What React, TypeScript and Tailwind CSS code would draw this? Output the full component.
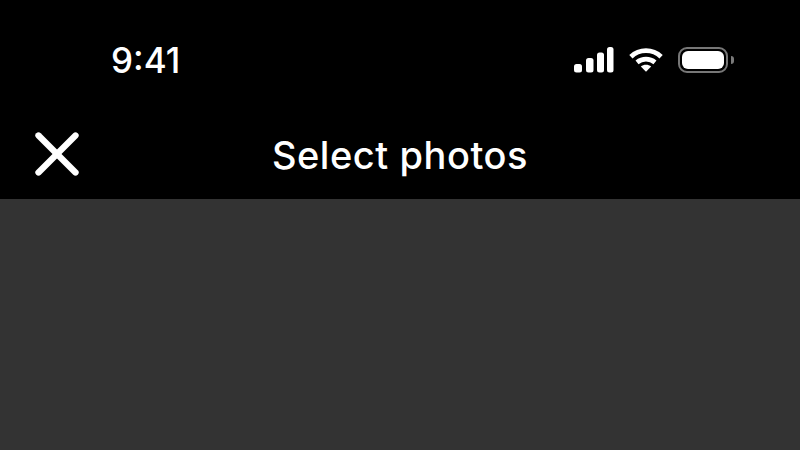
import { X } from "lucide-react";

function SignalIcon() {
  return (
    <svg width="40" height="26" viewBox="0 0 40 26" fill="white">
      <rect x="0" y="17" width="8" height="8.5" rx="2.5" />
      <rect x="12" y="11" width="7.5" height="14.5" rx="2.5" />
      <rect x="23" y="5.5" width="7" height="20" rx="2.5" />
      <rect x="33" y="0" width="6.5" height="25.5" rx="2.5" />
    </svg>
  );
}

function WifiIcon() {
  return (
    <svg width="34" height="26" viewBox="0 0 36 26" fill="none" stroke="white" strokeWidth="5">
      <path d="M2 9.5C11 1 25 1 34 9.5" />
      <path d="M8.5 15.5C14 11 22 11 27.5 15.5" />
      <path d="M18 25.5l-5.5-5.5c3-2.6 8-2.6 11 0z" fill="white" stroke="none" />
    </svg>
  );
}

function BatteryIcon() {
  return (
    <div className="flex items-center gap-[3px]">
      <div className="w-[50px] h-[26px] rounded-[9px] border-2 border-[#777777] p-[2px]">
        <div className="w-full h-full rounded-[6px] bg-white" />
      </div>
      <div className="w-[3px] h-[8px] rounded-r-full bg-[#7a7a7a]" />
    </div>
  );
}

export default function App() {
  return (
    <div className="w-[800px] h-[450px] flex flex-col bg-[#333333] overflow-hidden font-['Inter',sans-serif] text-white">
      <div className="bg-black h-[199px] flex flex-col">
        {/* Status bar */}
        <div className="h-[117px] pl-[111px] pr-[66px] pt-[40px] flex items-start justify-between">
          <span className="text-[35px] leading-[40px] font-medium">9:41</span>
          <div className="flex items-center gap-[15px] pt-[7px]">
            <SignalIcon />
            <WifiIcon />
            <BatteryIcon />
          </div>
        </div>

        {/* Nav bar */}
        <div className="grid grid-cols-[1fr_auto_1fr] items-center pl-[20px] h-[74px]">
          <X className="w-[74px] h-[74px]" strokeWidth={2.05} />
          <span className="text-[38px] leading-[44px] font-medium -ml-[20px] pt-[1px] tracking-[0.55px]">Select photos</span>
        </div>
      </div>
    </div>
  );
}
